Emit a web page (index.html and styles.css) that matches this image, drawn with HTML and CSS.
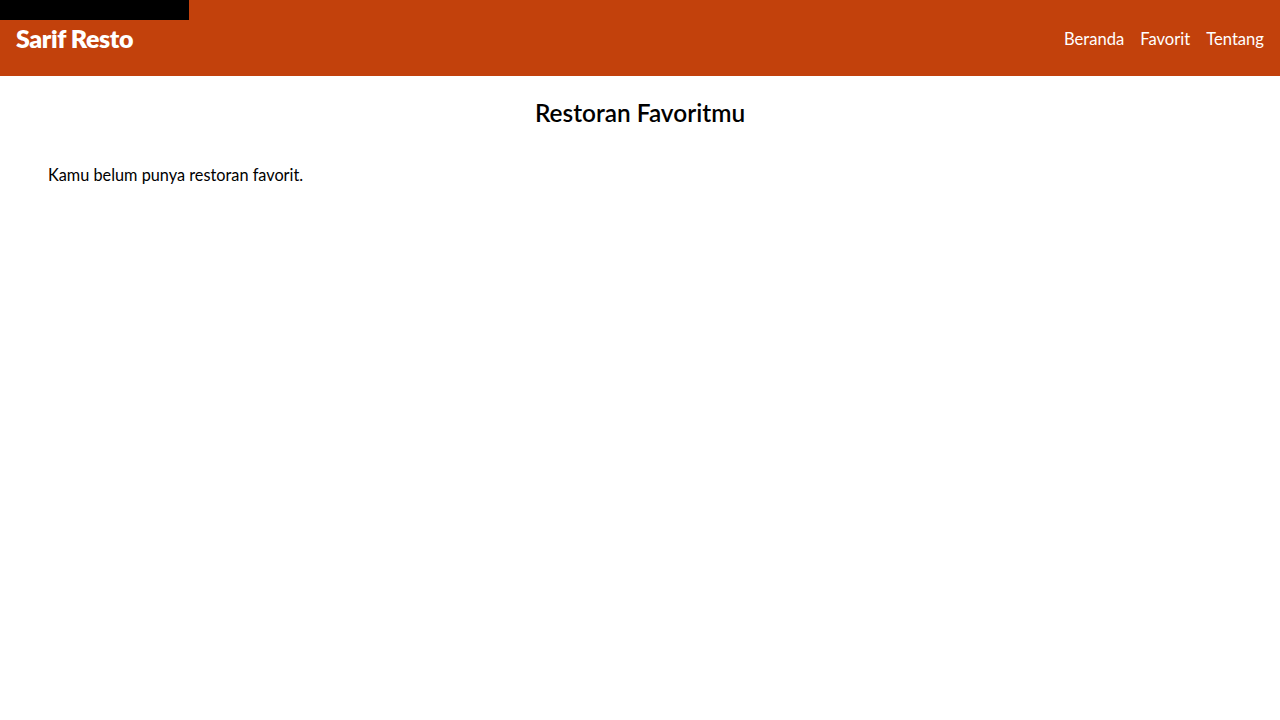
FILE: index.html
```html
<!DOCTYPE html>
<html lang="id">
<head>
<meta charset="utf-8">
<title>Sarif Resto</title>
<link rel="stylesheet" href="styles.css">
</head>
<body>
<a class="skip-link" href="#content">Skip to content</a>
<header class="app-bar">
  <h1 class="brand">Sarif Resto</h1>
  <nav class="nav">
    <a href="#">Beranda</a>
    <a href="#">Favorit</a>
    <a href="#">Tentang</a>
  </nav>
</header>
<main id="content" class="content">
  <h2 class="title">Restoran Favoritmu</h2>
  <p class="empty">Kamu belum punya restoran favorit.</p>
</main>
</body>
</html>
```
FILE: styles.css
```css
* { box-sizing: border-box; }
body {
  margin: 0;
  font-family: "Lato", "Open Sans", sans-serif;
  color: #000;
  background: #fff;
}
.skip-link {
  position: absolute;
  top: 0;
  left: 0;
  width: 189px;
  height: 20px;
  background: #000;
  color: #000;
  font-size: 1px;
  text-decoration: none;
}
.app-bar {
  display: flex;
  justify-content: space-between;
  align-items: flex-start;
  height: 76px;
  padding: 0 16px;
  background: #c2410c;
  color: #fff;
}
.brand {
  margin: 22px 0 0;
  font-size: 25px;
  font-weight: 800;
  letter-spacing: -0.4px;
  line-height: 32px;
}
.nav {
  display: flex;
  gap: 16px;
  margin-top: 28px;
}
.nav a {
  color: #fff;
  text-decoration: none;
  font-size: 16.6px;
  line-height: 22px;
}
.content {
  padding: 0 48px;
}
.title {
  margin: 21px 0 0;
  text-align: center;
  font-size: 24.4px;
  font-weight: 600;
  line-height: 32px;
}
.empty {
  margin: 35px 0 0;
  font-size: 16.3px;
  line-height: 22px;
}
```
